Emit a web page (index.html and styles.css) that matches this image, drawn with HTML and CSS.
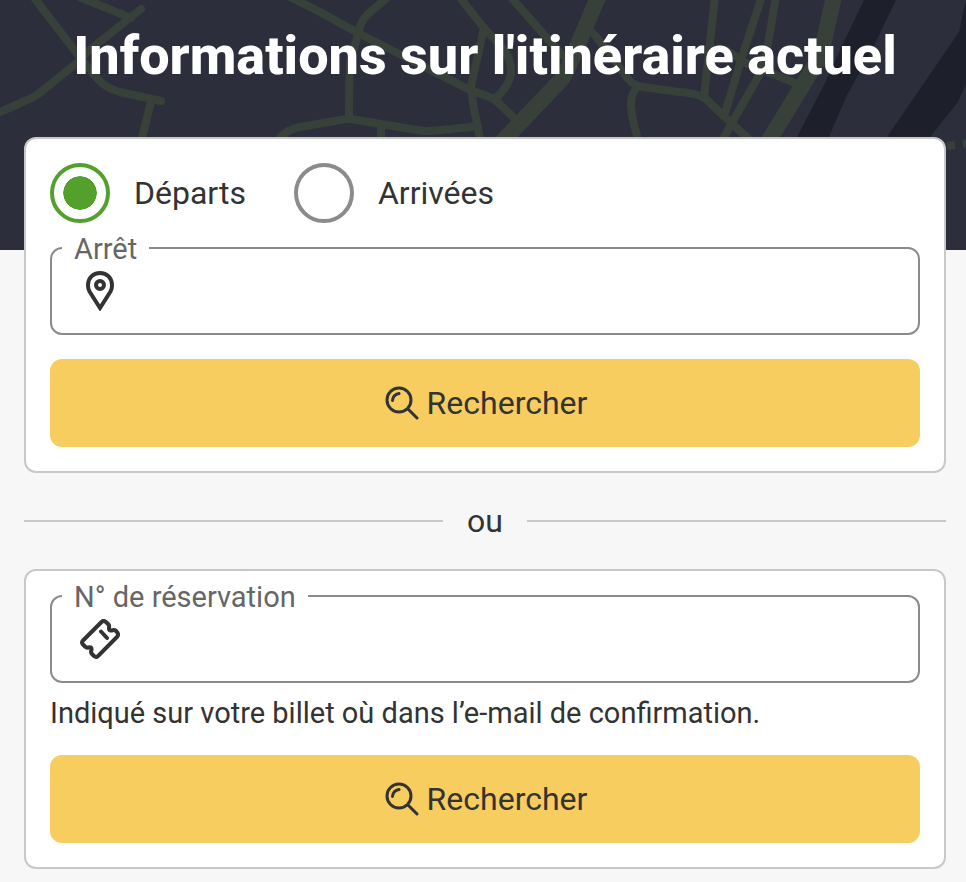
FILE: index.html
```html
<!DOCTYPE html>
<html lang="fr">
<head>
<meta charset="utf-8">
<meta name="viewport" content="width=device-width, initial-scale=1">
<title>Informations sur l'itinéraire actuel</title>
<link rel="stylesheet" href="styles.css">
</head>
<body>
<svg class="map" viewBox="0 0 966 250" preserveAspectRatio="xMidYMin slice" aria-hidden="true">
  <g class="river">
    <path d="M864 0H896L872 50L846 97L829 137L820 160H785L797 137L823 87L840 50Z"/>
    <path d="M966 0L959 32L887 137L877 152H920L930 137L958 102L966 84Z"/>
  </g>
  <g class="roads">
    <path d="M32 -5L82 60L97 78Q105 88 120 92L161 101"/>
    <path d="M141 9L86 53L78 62L42 91Q35 97 27 100L-4 114"/>
    <path d="M72 -6L131 18M151 102L141 142"/>
    <path d="M284 -6L320 12L358 33L470 90L492 98Q497 101 516 120"/>
    <path d="M389 -4L367 15Q361 21 359 31L351 58Q349 66 349 119"/>
    <path d="M278 140Q287 129 300 127L346 119H351L423 131Q428 132 478 126M381 124V140"/>
    <path d="M458 -5L484 28L499 44Q525 72 495 99"/>
    <path d="M484 28L471 86L473 103L480 140"/>
    <path d="M509 -5L547 38L562 55"/>
    <path d="M592 32L607 50L628 79Q634 86 643 87L679 92Q696 93 705 98L729 121L752 142"/>
    <path d="M636 88C629 98 629 107 638 140"/>
    <path d="M715 -4L704 98M762 -4L742 57L724 116"/>
    <path d="M776 -4L768 44Q766 62 758 77L733 121L722 141"/>
    <path d="M726 50L746 63L795 83"/>
    <path class="major" d="M599 -5L567 70Q564 77 559 82L500 144"/>
    <path class="major" d="M834 -4L822 50Q820 58 815 65L768 142"/>
    <path class="track" d="M947 146L970 143"/>
  </g>
</svg>

<main class="page">
  <h1 class="title">Informations sur l'itinéraire actuel</h1>

  <form class="card">
    <div class="choices" role="radiogroup" aria-label="Type d'horaires">
      <label class="choice"><input class="radio" type="radio" name="direction" checked>Départs</label>
      <label class="choice"><input class="radio" type="radio" name="direction">Arrivées</label>
    </div>
    <div class="field">
      <label class="field-label" for="stop">Arrêt</label>
      <svg class="field-icon" viewBox="0 0 40 40" aria-hidden="true">
        <path d="M20 37L9.500 20.500C7.900 17.900 8 16.200 8 14C8 7 13 2 20 2S32 7 32 14C32 16.200 32.100 17.900 30.500 20.500Z"/>
        <circle cx="20" cy="14" r="4"/>
      </svg>
      <input class="field-input" id="stop" type="text">
    </div>
    <button class="button" type="submit">
      <svg class="button-icon" viewBox="0 0 36 36" aria-hidden="true">
        <circle cx="16" cy="15" r="12"/><path d="M25 24L34 33M9.500 15.500Q10 9.500 16 8.500"/>
      </svg>
      Rechercher
    </button>
  </form>

  <div class="divider">ou</div>

  <form class="card">
    <div class="field">
      <label class="field-label" for="booking">N° de réservation</label>
      <svg class="field-icon" viewBox="0 0 40 40" aria-hidden="true">
        <path d="M3 21.500L21.500 3Q23.500 1 26 3L28.500 5.500Q29.500 6.500 29 8.500Q28.500 12 31.500 11.500Q34.500 10.500 36 12L37 13Q39 15.500 37 18L18.500 36.500Q16.500 39 14 37L12 35Q10.500 33.500 11.500 31Q12 27.500 8.500 28.500Q6.500 29 5 27.500L3 25.500Q1 23.500 3 21.500ZM21 12.500L27 19"/>
      </svg>
      <input class="field-input" id="booking" type="text" aria-describedby="booking-help">
    </div>
    <p class="help" id="booking-help">Indiqué sur votre billet où dans l’e-mail de confirmation.</p>
    <button class="button" type="submit">
      <svg class="button-icon" viewBox="0 0 36 36" aria-hidden="true">
        <circle cx="16" cy="15" r="12"/><path d="M25 24L34 33M9.500 15.500Q10 9.500 16 8.500"/>
      </svg>
      Rechercher
    </button>
  </form>
</main>
</body>
</html>
```
FILE: styles.css
```css
* {
  box-sizing: border-box;
}

body {
  margin: 0;
  background: #f7f7f7;
  color: #333;
  font-family: Roboto, "Liberation Sans", sans-serif;
  font-size: 32px;
  line-height: 48px;
}

/* Decorative map behind the title and the top of the first card */
.map {
  position: absolute;
  top: 0;
  left: 0;
  z-index: -1;
  width: 100%;
  height: 250px;
  background: #2c2f3b;
}

.river {
  fill: #1d202b;
}

.roads {
  fill: none;
  stroke: #38403a;
  stroke-width: 8;
  stroke-linecap: round;
}

.roads .major {
  stroke-width: 16;
}

.roads .track {
  stroke-linecap: butt;
  stroke-dasharray: 8;
}

.page {
  padding: 24px 20px 12px 24px;
}

.title {
  margin: 0 0 49px;
  color: #fff;
  font-size: 54px;
  font-weight: 800;
  line-height: 64px;
  text-align: center;
}

.card {
  display: flex;
  flex-direction: column;
  gap: 24px;
  padding: 24px;
  border: 2px solid #c8c8c8;
  border-radius: 12px;
  background: #fff;
}

.choices {
  display: flex;
  flex-wrap: wrap;
  gap: 24px 48px;
}

.choice {
  display: flex;
  align-items: center;
  gap: 24px;
}

.radio {
  width: 60px;
  height: 60px;
  margin: 0;
  padding: 9px;
  border: 4px solid #8b8b8b;
  border-radius: 50%;
  background: #fff content-box;
  appearance: none;
}

.radio:checked {
  border-color: #54a02d;
  background-image: radial-gradient(circle closest-side, #54a02d 97%, transparent);
}

.field {
  position: relative;
  display: flex;
  align-items: center;
  height: 88px;
  padding: 0 28px;
  border: 2px solid #8b8b8b;
  border-radius: 12px;
}

.field-label {
  position: absolute;
  top: -18px;
  left: 10px;
  padding: 0 12px;
  background: #fff;
  color: #666;
  font-size: 29px;
  line-height: 36px;
}

.field-icon {
  flex: none;
  width: 40px;
  height: 40px;
  fill: none;
  stroke: #333;
  stroke-width: 4;
  stroke-linecap: round;
}

.field-input {
  flex: 1;
  min-width: 0;
  height: 48px;
  margin-left: 16px;
  padding: 0;
  border: 0;
  outline: 0;
  background: none;
  color: inherit;
  font: inherit;
}

.help {
  margin: -12px 0 0;
  font-size: 29px;
  line-height: 36px;
}

.button {
  display: flex;
  align-items: center;
  justify-content: center;
  gap: 8px;
  height: 88px;
  padding: 0 24px;
  border: 0;
  border-radius: 12px;
  background: #f7cd60;
  color: inherit;
  font: inherit;
}

.button-icon {
  width: 36px;
  height: 36px;
  fill: none;
  stroke: #333;
  stroke-width: 3;
  stroke-linecap: round;
}

.divider {
  display: flex;
  align-items: center;
  gap: 24px;
  margin: 24px 0;
}

.divider::before,
.divider::after {
  flex: 1;
  height: 2px;
  background: #c8c8c8;
  content: "";
}
```
